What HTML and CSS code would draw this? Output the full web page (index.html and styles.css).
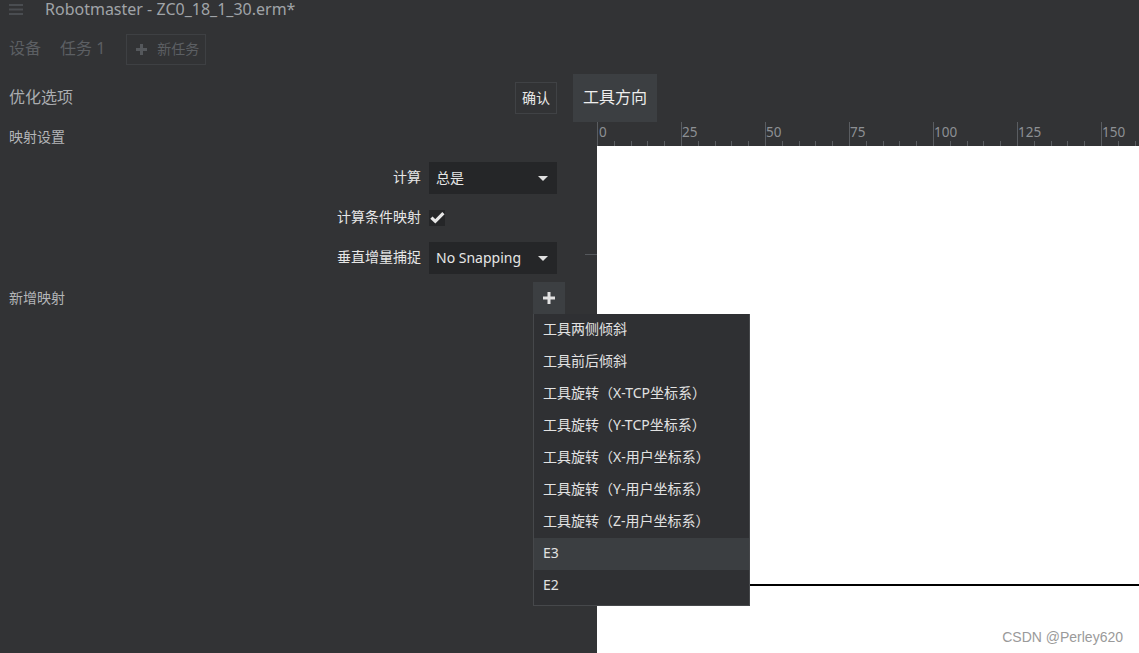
FILE: index.html
```html
<!DOCTYPE html>
<html lang="zh">
<head>
<meta charset="utf-8">
<title>Robotmaster</title>
<link rel="stylesheet" href="styles.css">
</head>
<body>
<div class="app">
  <header class="topbar">
    <svg class="hamburger" width="14" height="11" viewBox="0 0 14 11"><rect x="0" y="0" width="14" height="2" fill="#4a4d51"/><rect x="0" y="4.5" width="14" height="2" fill="#4a4d51"/><rect x="0" y="9" width="14" height="2" fill="#4a4d51"/></svg>
    <span class="title">Robotmaster - ZC0_18_1_30.erm*</span>
  </header>
  <nav class="tabs">
    <span class="tab">设备</span>
    <span class="tab">任务 1</span>
    <button class="newtask"><svg width="11" height="11" viewBox="0 0 11 11"><rect x="4" y="0" width="3" height="11" fill="#55585c"/><rect x="0" y="4" width="11" height="3" fill="#55585c"/></svg><span>新任务</span></button>
  </nav>
  <main class="main">
    <section class="leftpanel">
      <div class="panelhead">
        <span class="panelTitle">优化选项</span>
        <button class="confirm">确认</button>
      </div>
      <div class="section-label">映射设置</div>
      <div class="form">
        <div class="frow">
          <label class="flabel">计算</label>
          <div class="select"><span>总是</span><span class="caret"></span></div>
        </div>
        <div class="frow">
          <label class="flabel">计算条件映射</label>
          <div class="checkbox"><svg width="15" height="13" viewBox="0 0 15 13"><path d="M1.4 6.6 L5.3 10.3 L13.4 2.2" fill="none" stroke="#e6e6e6" stroke-width="3.2"/></svg></div>
        </div>
        <div class="frow">
          <label class="flabel">垂直增量捕捉</label>
          <div class="select"><span>No Snapping</span><span class="caret"></span></div>
        </div>
      </div>
      <div class="addrow">
        <span class="section-label inline">新增映射</span>
        <button class="plusbtn"><svg width="12" height="12" viewBox="0 0 12 12"><rect x="4.5" y="0" width="3" height="12" fill="#e2e2e2"/><rect x="0" y="4.5" width="12" height="3" fill="#e2e2e2"/></svg></button>
        <ul class="menu">
          <li>工具两侧倾斜</li>
          <li>工具前后倾斜</li>
          <li>工具旋转（X-TCP坐标系）</li>
          <li>工具旋转（Y-TCP坐标系）</li>
          <li>工具旋转（X-用户坐标系）</li>
          <li>工具旋转（Y-用户坐标系）</li>
          <li>工具旋转（Z-用户坐标系）</li>
          <li class="active">E3</li>
          <li>E2</li>
        </ul>
      </div>
    </section>
    <section class="rightpanel">
      <div class="tabrow"><span class="viewtab">工具方向</span></div>
      <div class="rulerrow">
        <div class="corner"></div>
        <svg class="ruler" width="542" height="24" viewBox="0 0 542 24">
          <g stroke="#5a5d61" stroke-width="1">
            <line x1="0.5" y1="0" x2="0.5" y2="24"/>
            <line x1="84.5" y1="0" x2="84.5" y2="24"/>
            <line x1="168.5" y1="0" x2="168.5" y2="24"/>
            <line x1="252.5" y1="0" x2="252.5" y2="24"/>
            <line x1="336.5" y1="0" x2="336.5" y2="24"/>
            <line x1="420.5" y1="0" x2="420.5" y2="24"/>
            <line x1="504.5" y1="0" x2="504.5" y2="24"/>
          </g>
          <g stroke="#5a5d61" stroke-width="1">
            <line x1="17.5" y1="19" x2="17.5" y2="24"/><line x1="34.5" y1="19" x2="34.5" y2="24"/><line x1="50.5" y1="19" x2="50.5" y2="24"/><line x1="67.5" y1="19" x2="67.5" y2="24"/>
            <line x1="101.5" y1="19" x2="101.5" y2="24"/><line x1="118.5" y1="19" x2="118.5" y2="24"/><line x1="134.5" y1="19" x2="134.5" y2="24"/><line x1="151.5" y1="19" x2="151.5" y2="24"/>
            <line x1="185.5" y1="19" x2="185.5" y2="24"/><line x1="202.5" y1="19" x2="202.5" y2="24"/><line x1="218.5" y1="19" x2="218.5" y2="24"/><line x1="235.5" y1="19" x2="235.5" y2="24"/>
            <line x1="269.5" y1="19" x2="269.5" y2="24"/><line x1="286.5" y1="19" x2="286.5" y2="24"/><line x1="302.5" y1="19" x2="302.5" y2="24"/><line x1="319.5" y1="19" x2="319.5" y2="24"/>
            <line x1="353.5" y1="19" x2="353.5" y2="24"/><line x1="370.5" y1="19" x2="370.5" y2="24"/><line x1="386.5" y1="19" x2="386.5" y2="24"/><line x1="403.5" y1="19" x2="403.5" y2="24"/>
            <line x1="437.5" y1="19" x2="437.5" y2="24"/><line x1="454.5" y1="19" x2="454.5" y2="24"/><line x1="470.5" y1="19" x2="470.5" y2="24"/><line x1="487.5" y1="19" x2="487.5" y2="24"/>
            <line x1="521.5" y1="19" x2="521.5" y2="24"/><line x1="538.5" y1="19" x2="538.5" y2="24"/>
          </g>
          <g fill="#8d9094" font-family="Noto Sans, sans-serif" font-size="13.5">
            <text x="2" y="15">0</text>
            <text x="85" y="15">25</text>
            <text x="169" y="15">50</text>
            <text x="253" y="15">75</text>
            <text x="337" y="15">100</text>
            <text x="421" y="15">125</text>
            <text x="505" y="15">150</text>
          </g>
        </svg>
      </div>
      <div class="viewport">
        <div class="vruler"><span class="vtick"></span></div>
        <div class="canvas">
          <svg class="drawing" width="542" height="507" viewBox="0 0 542 507"><line x1="0" y1="439" x2="542" y2="439" stroke="#000" stroke-width="2"/></svg>
          <span class="watermark">CSDN @Perley620</span>
        </div>
      </div>
    </section>
  </main>
</div>
</body>
</html>
```
FILE: styles.css
```css
* { box-sizing: border-box; }
html, body { margin: 0; padding: 0; }
body {
  background: #323335;
  font-family: "Noto Sans", "Noto Sans CJK SC", sans-serif;
  color: #e4e4e4;
  width: 1139px;
  height: 653px;
  overflow: hidden;
}
.app { display: flex; flex-direction: column; height: 653px; }
.topbar {
  height: 20px;
  display: flex;
  align-items: center;
  padding-left: 9px;
  padding-bottom: 2px;
}
.hamburger { margin-right: 22px; }
.title { font-size: 16px; color: #a0a4a8; line-height: 18px; }
.tabs {
  margin-top: 14px;
  height: 31px;
  display: flex;
  align-items: center;
  padding-left: 9px;
}
.tab { font-size: 16px; color: #5c5f63; margin-right: 19px; line-height: 20px; padding-bottom: 4px; }
.newtask {
  height: 31px;
  width: 80px;
  background: transparent;
  border: 1px solid #3e4043;
  display: flex;
  align-items: center;
  gap: 10px;
  padding: 0 0 3px 9px;
  font-family: inherit;
  font-size: 14px;
  color: #5c5f63;
  margin-left: 2px;
}
.newtask svg { margin-top: 3px; }
.main {
  margin-top: 9px;
  flex: 1;
  display: flex;
  min-height: 0;
}
.leftpanel {
  width: 573px;
  flex: none;
  display: flex;
  flex-direction: column;
}
.panelhead {
  height: 48px;
  display: flex;
  align-items: center;
  justify-content: space-between;
  padding: 0 16px 0 9px;
}
.panelTitle { font-size: 16px; color: #aaadb0; line-height: 20px; padding-bottom: 3px; }
.confirm {
  height: 32px;
  width: 42px;
  padding: 0 0 3px 0;
  background: transparent;
  border: 1px solid #404245;
  font-family: inherit;
  font-size: 14px;
  color: #e8e8e8;
  margin-top: 0;
}
.section-label {
  font-size: 14px;
  color: #b3b5b8;
  padding-left: 9px;
  height: 30px;
  line-height: 29px;
}
.section-label.inline { padding-left: 9px; }
.form {
  display: flex;
  flex-direction: column;
  gap: 8px;
  margin-top: 10px;
}
.frow {
  display: flex;
  align-items: center;
  height: 32px;
}
.flabel {
  width: 421px;
  text-align: right;
  font-size: 14px;
  color: #e6e6e6;
  margin-right: 8px;
  line-height: 20px;
  padding-bottom: 3px;
}
.select {
  width: 128px;
  height: 32px;
  background: #252628;
  display: flex;
  align-items: center;
  justify-content: space-between;
  padding: 0 9px 2px 7px;
  font-size: 14px;
  color: #e6e6e6;
}
.caret {
  width: 0; height: 0;
  margin-top: 2px;
  border-left: 5px solid transparent;
  border-right: 5px solid transparent;
  border-top: 5px solid #e0e0e0;
}
.checkbox {
  width: 16px;
  height: 16px;
  background: #252628;
  display: flex;
  align-items: center;
  justify-content: center;
  margin-top: -1px;
}
.addrow {
  position: relative;
  margin-top: 8px;
  height: 32px;
  display: flex;
  align-items: center;
  justify-content: space-between;
  padding-right: 8px;
}
.plusbtn {
  width: 32px;
  height: 32px;
  background: #3c3f42;
  border: none;
  padding: 0;
  display: flex;
  align-items: center;
  justify-content: center;
}
.menu {
  position: absolute;
  left: 533px;
  top: 32px;
  width: 217px;
  margin: 0;
  padding: 0 0 3px 0;
  list-style: none;
  background: #2f3033;
  border: 1px solid #46484b;
  border-top: none;
  z-index: 5;
}
.menu li {
  height: 32px;
  line-height: 30px;
  padding-left: 9px;
  font-size: 14px;
  color: #e2e2e2;
}
.menu li.active { background: #3b3e41; }
.rightpanel {
  flex: 1;
  display: flex;
  flex-direction: column;
  min-width: 0;
}
.tabrow { height: 48px; display: flex; }
.viewtab {
  width: 84px;
  height: 48px;
  background: #3c3f42;
  font-size: 16px;
  color: #eeeeee;
  display: flex;
  align-items: center;
  justify-content: center;
  padding-bottom: 4px;
}
.rulerrow { height: 24px; display: flex; }
.corner { width: 24px; flex: none; }
.ruler { display: block; }
.viewport { flex: 1; display: flex; min-height: 0; }
.vruler { width: 24px; flex: none; padding-top: 108px; padding-left: 12px; }
.vtick { display: block; width: 12px; height: 1px; background: #55585c; }
.canvas {
  flex: 1;
  background: #ffffff;
  position: relative;
}
.drawing { display: block; }
.watermark {
  position: absolute;
  right: 16px;
  bottom: 8px;
  font-family: "Liberation Sans", Arial, sans-serif;
  font-size: 14px;
  color: #9a9a9a;
}
```
